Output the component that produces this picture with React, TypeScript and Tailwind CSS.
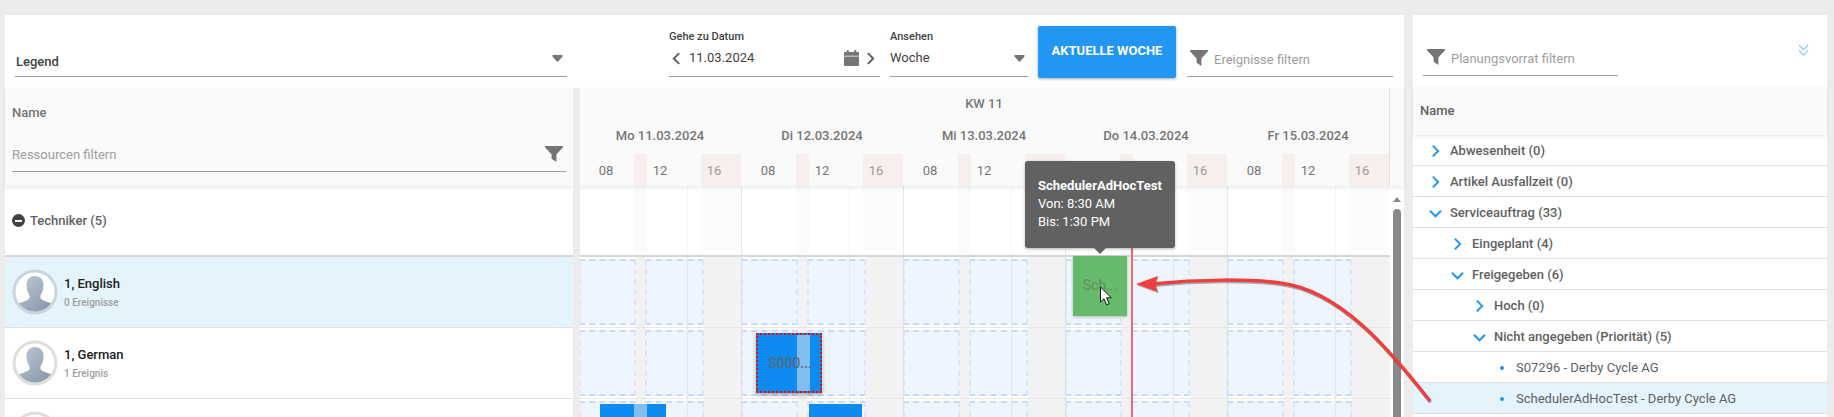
const days = ['Mo 11.03.2024', 'Di 12.03.2024', 'Mi 13.03.2024', 'Do 14.03.2024', 'Fr 15.03.2024']

const tree = [
  { label: 'Abwesenheit (0)', level: 0, kind: 'closed' },
  { label: 'Artikel Ausfallzeit (0)', level: 0, kind: 'closed' },
  { label: 'Serviceauftrag (33)', level: 0, kind: 'open' },
  { label: 'Eingeplant (4)', level: 1, kind: 'closed' },
  { label: 'Freigegeben (6)', level: 1, kind: 'open' },
  { label: 'Hoch (0)', level: 2, kind: 'closed' },
  { label: 'Nicht angegeben (Priorität) (5)', level: 2, kind: 'open' },
  { label: 'S07296 - Derby Cycle AG', level: 3, kind: 'leaf' },
  { label: 'SchedulerAdHocTest - Derby Cycle AG', level: 3, kind: 'leaf', selected: true },
]

function Funnel({ className }: { className?: string }) {
  return (
    <svg viewBox="0 0 18 16" className={className} fill="#757575">
      <path d="M0 0h18v1.2l-6.6 7.3V16l-4.8-3.2V8.500L0 1.200z" />
    </svg>
  )
}

function Caret({ className }: { className?: string }) {
  return (
    <svg viewBox="0 0 12 8" className={className} fill="#757575">
      <path d="M1 0h10c.9 0 1.300 1 .7 1.600L6.700 7.300c-.4.4-1 .4-1.400 0L.3 1.600C-.3 1 .1 0 1 0z" />
    </svg>
  )
}

function Chevron({ dir, color = '#2196f3', className }: { dir: 'left' | 'right' | 'down'; color?: string; className?: string }) {
  const d = dir === 'left' ? 'M8 1 2 7l6 6' : dir === 'right' ? 'M2 1l6 6-6 6' : 'M1 3l6 6 6-6'
  return (
    <svg viewBox={dir === 'down' ? '0 0 14 12' : '0 0 10 14'} className={className} fill="none" stroke={color} strokeWidth="2.200">
      <path d={d} />
    </svg>
  )
}

function Avatar({ ring }: { ring: string }) {
  return (
    <svg viewBox="0 0 46 46" className="w-[46px] h-[46px] shrink-0">
      <defs>
        <linearGradient id="sil" x1="0" y1="0" x2="1" y2="1">
          <stop offset="0" stopColor="#c2ccd6" />
          <stop offset="1" stopColor="#7d8fa3" />
        </linearGradient>
        <clipPath id="inner">
          <circle cx="23" cy="23" r="20.500" />
        </clipPath>
      </defs>
      <circle cx="23" cy="23" r="20.500" fill="#fff" />
      <g clipPath="url(#inner)" fill="url(#sil)">
        <path d="M23 7c5.500 0 8.500 3.800 8.500 9.500 0 3.500-1 6.500-2.500 8.800-.8 1.200-.9 3.400 0 4.500 1.500 1.700 5 2.700 8 3.700 3 1 5 2.500 6 5V46H3v-7.500c1-2.500 3-4 6-5s6.500-2 8-3.700c.9-1.100.8-3.300 0-4.500-1.500-2.300-2.500-5.300-2.500-8.800C14.500 10.800 17.500 7 23 7z" />
      </g>
      <circle cx="23" cy="23" r="21" fill="none" stroke={ring} strokeWidth="3" />
    </svg>
  )
}

function DayGrid({ day }: { day: number }) {
  return (
    <div className="relative w-[162px] h-full flex shrink-0">
      <div className="w-[57px] bg-white pt-[2px]">
        <div className="h-[66px] bg-[#eef5fe] border-y-2 border-x-2 border-dashed border-y-[#c6dbfb] border-x-[#dce6f6]" />
      </div>
      <div className="w-[9px]" />
      <div className="w-[59px] bg-white pt-[2px]">
        <div className="h-[66px] bg-[#eef5fe] border-y-2 border-x-2 border-dashed border-y-[#c6dbfb] border-x-[#dce6f6]" />
      </div>
      <div className="flex-1" />
      <div className="absolute inset-y-0 left-[108px] w-px bg-[#e3e8f1]" />
      {day > 0 && <div className="absolute inset-y-0 left-0 w-px bg-[#d9dee8]" />}
    </div>
  )
}

function TimelineRow({ children }: { children?: React.ReactNode }) {
  return (
    <div className="relative h-[71px] -ml-px flex border-b border-[#e6e6e6] bg-[#f2f2f2]">
      {days.map((d, i) => (
        <DayGrid key={d} day={i} />
      ))}
      {children}
    </div>
  )
}

function Field({ className, children }: { className?: string; children: React.ReactNode }) {
  return <div className={`border-b border-[#9e9e9e] ${className ?? ''}`}>{children}</div>
}

function ResourceRow({ name, count, selected }: { name: string; count: string; selected?: boolean }) {
  return (
    <div className={`h-[71px] flex items-center pl-[7px] gap-[6px] border-b border-[#e0e0e0] ${selected ? 'bg-[#e5f3fd]' : 'bg-white'}`}>
      <Avatar ring={selected ? '#c9d5dd' : '#dedede'} />
      <div>
        <div className="text-[13px] leading-[18px] font-medium text-[#212121]">{name}</div>
        <div className="text-[10px] leading-[14px] mt-[3px] font-medium text-[#9e9e9e]">{count}</div>
      </div>
    </div>
  )
}

export default function App() {
  return (
    <div className="relative w-[1834px] h-[417px] overflow-hidden bg-[#ececec] pt-[15px] flex font-[family-name:Roboto,sans-serif]">

      {/* Scheduler */}
      <div className="ml-[5px] w-[1399px] h-full bg-white flex flex-col shrink-0">

        {/* Toolbar */}
        <div className="h-[73px] relative flex items-end pb-[11px] pl-[10px] shrink-0">
          <Field className="w-[552px] h-[30px] flex items-start justify-between pl-px pr-[4px]">
            <span className="text-[13px] leading-[18px] mt-[6px] font-medium text-[#424242]">Legend</span>
            <Caret className="w-[11px] h-[7px] mt-[8px]" />
          </Field>
          <div className="ml-[102px] w-[211px]">
            <div className="text-[11px] leading-[14px] font-medium text-[#424242] mb-[6px]">Gehe zu Datum</div>
            <Field className="h-[27px] flex items-start">
              <Chevron dir="left" color="#616161" className="w-[9px] h-[13px] mt-[2px] ml-[3px]" />
              <span className="text-[13px] leading-[18px] -mt-px ml-[8px] text-[#424242]">11.03.2024</span>
              <svg viewBox="0 0 16 17" className="w-[15px] h-[16px] ml-[90px] mt-0" fill="#757575">
                <path d="M3 0h2v2h6V0h2v2h2c.6 0 1 .4 1 1v3H0V3c0-.6.4-1 1-1h2zM0 7h16v9c0 .6-.4 1-1 1H1c-.6 0-1-.4-1-1z" />
              </svg>
              <Chevron dir="right" color="#616161" className="w-[9px] h-[13px] mt-[2px] ml-[7px]" />
            </Field>
          </div>
          <div className="ml-[10px] w-[138px]">
            <div className="text-[11px] leading-[14px] font-medium text-[#424242] mb-[6px]">Ansehen</div>
            <Field className="h-[27px] flex items-start justify-between pr-[3px]">
              <span className="text-[13px] leading-[18px] -mt-px text-[#424242]">Woche</span>
              <Caret className="w-[11px] h-[7px] mt-[5px]" />
            </Field>
          </div>
          <button className="ml-[10px] w-[138px] h-[52px] -mb-px pb-[2px] rounded-[2px] bg-[#2196f3] text-white text-[13px] font-bold shadow-[0_1px_3px_rgba(0,0,0,0.35)]">
            AKTUELLE WOCHE
          </button>
          <Field className="ml-[11px] w-[206px] h-[30px] flex items-start pl-[3px]">
            <Funnel className="w-[18px] h-[16px] mt-[3px]" />
            <span className="text-[13px] leading-[18px] mt-[4px] ml-[6px] text-[#9e9e9e]">Ereignisse filtern</span>
          </Field>
        </div>

        {/* Column headers */}
        <div className="relative z-10 h-[98px] flex bg-[#fafafa] shadow-[0_2px_4px_rgba(0,0,0,0.08)] shrink-0">
          <div className="w-[568px] pl-[7px] pr-[7px] shrink-0">
            <div className="mt-[16px] text-[13px] leading-[18px] font-medium text-[#757575]">Name</div>
            <div className="mt-[20px] h-[30px] flex items-start justify-between border-b border-[#9e9e9e]">
              <span className="text-[13px] leading-[18px] text-[#9e9e9e] mt-[4px]">Ressourcen filtern</span>
              <Funnel className="w-[18px] h-[16px] mt-[4px] mr-[3px]" />
            </div>
          </div>
          <div className="relative z-10 w-[7px] bg-[#ececec] shrink-0" />
          <div className="-ml-px w-[811px] border-r border-[#e0e0e0] shrink-0">
            <div className="h-[32px] flex items-center justify-center text-[13px] font-medium text-[#757575]">KW 11</div>
            <div className="h-[34px] flex items-start">
              {days.map((d) => (
                <div key={d} className="w-[162px] text-center text-[13px] leading-[34px] font-medium text-[#757575] -mt-px">{d}</div>
              ))}
            </div>
            <div className="h-[32px] flex">
              {days.map((d) => (
                <div key={d} className="relative w-[162px] grid grid-cols-3 text-[13px] leading-[34px] text-center text-[#757575]">
                  <div className="absolute inset-y-0 left-[55px] w-[13px] bg-[#f7eeee]" />
                  <div className="absolute inset-y-0 left-[122px] w-[40px] bg-[#f7eeee]" />
                  <span className="relative">08</span>
                  <span className="relative">12</span>
                  <span className="relative text-[#a09a9a]">16</span>
                </div>
              ))}
            </div>
          </div>
        </div>

        {/* Rows */}
        <div className="flex flex-1 min-h-0">
          <div className="w-[568px] shrink-0">
            <div className="h-[71px] pl-[7px] flex items-center gap-[5px] border-b-2 border-[#d6d6d6]">
              <span className="w-[13px] h-[13px] rounded-full bg-[#424242] flex items-center justify-center">
                <span className="w-[7px] h-[2px] bg-white" />
              </span>
              <span className="text-[13px] font-medium text-[#616161]">Techniker (5)</span>
            </div>
            <ResourceRow name="1, English" count="0 Ereignisse" selected />
            <ResourceRow name="1, German" count="1 Ereignis" />
            <div className="h-[30px] flex items-start pl-[7px] pt-[12px]">
              <Avatar ring="#dedede" />
            </div>
          </div>
          <div className="relative z-10 w-[7px] bg-[#ececec] shrink-0" />
          <div className="w-[810px] shrink-0">
            <div className="relative h-[71px] -ml-px flex border-b-2 border-[#d6d6d6]">
              {days.map((d, i) => (
                <div key={d} className="relative w-[162px]">
                  <div className="absolute inset-y-0 left-[55px] w-[13px] bg-[#fbfbfb]" />
                  <div className="absolute inset-y-0 left-[122px] w-[40px] bg-[#fcfcfc]" />
                  <div className="absolute inset-y-0 left-[108px] w-px bg-[#f4f4f4]" />
                  {i > 0 && <div className="absolute inset-y-0 left-0 w-px bg-[#e8e8e8]" />}
                </div>
              ))}
            </div>
            <TimelineRow>
              <div className="absolute left-[494px] top-[-1px] w-[54px] h-[60px] bg-[#66bb6a] shadow-[0_1px_3px_rgba(0,0,0,0.25)] flex items-center justify-center text-[14px] text-[#5f8f64] pb-[2px]">
                Sch...
              </div>
            </TimelineRow>
            <TimelineRow>
              <div className="absolute left-[177px] top-[5px] w-[66px] h-[60px] bg-[#0d8bf0] border-2 border-dotted border-[#ff0000] shadow-[0_2px_4px_rgba(0,0,0,0.3)] flex items-center justify-end pr-[8px] text-[14px] font-medium text-[#566a7c]">
                <div className="absolute top-0 bottom-0 left-[39px] w-[13px] bg-[#82bdf1]" />
                <span className="relative">S000...</span>
              </div>
            </TimelineRow>
            <TimelineRow>
              <div className="absolute left-[21px] top-[5px] w-[66px] h-[60px] bg-[#0d8bf0]">
                <div className="absolute inset-y-0 left-[34px] w-[13px] bg-[#82bdf1]" />
              </div>
              <div className="absolute left-[230px] top-[5px] w-[53px] h-[60px] bg-[#0d8bf0]" />
            </TimelineRow>
          </div>
          <div className="relative w-[15px] shrink-0">
            <svg viewBox="0 0 8 5" className="absolute left-[3px] top-[11px] w-[8px] h-[5px]" fill="#8a8a8a">
              <path d="M4 0l4 5H0z" />
            </svg>
            <div className="absolute left-[3px] top-[23px] w-[8px] h-[300px] rounded-full bg-[#8a8a8a]" />
          </div>
        </div>
      </div>

      {/* Planning backlog */}
      <div className="ml-[9px] w-[414px] h-full bg-white flex flex-col shrink-0">
        <div className="relative h-[72px] flex items-end pb-[11px] pl-[10px] shrink-0">
          <Field className="w-[195px] h-[30px] flex items-start pl-[4px]">
            <Funnel className="w-[18px] h-[16px] mt-[3px]" />
            <span className="text-[13px] leading-[18px] mt-[4px] ml-[6px] text-[#9e9e9e]">Planungsvorrat filtern</span>
          </Field>
          <svg viewBox="0 0 12 14" className="absolute right-[18px] top-[29px] w-[11px] h-[13px]" fill="none" stroke="#90caf9" strokeWidth="1.400">
            <path d="M1 1l5 5 5-5M1 7l5 5 5-5" />
          </svg>
        </div>
        <div className="relative z-10 h-[48px] pl-[7px] flex items-center bg-[#fafafa] shadow-[0_2px_4px_rgba(0,0,0,0.08)] text-[13px] font-medium text-[#616161] shrink-0">
          Name
        </div>
        {tree.map((t) => (
          <div
            key={t.label}
            className={`h-[31px] shrink-0 pt-[2px] flex items-center border-b border-[#e0e0e0] ${t.selected ? 'bg-[#e5f3fd]' : ''}`}
          >
            <div
              className={
                t.level === 0 ? 'w-[37px] flex justify-end pr-[10px]'
                : t.level === 1 ? 'w-[59px] flex justify-end pr-[10px]'
                : t.level === 2 ? 'w-[81px] flex justify-end pr-[10px]'
                : 'w-[103px] flex justify-end pr-[12px]'
              }
            >
              {t.kind === 'closed' && <Chevron dir="right" className="w-[9px] h-[14px]" />}
              {t.kind === 'open' && <Chevron dir="down" className="w-[13px] h-[11px] -mr-[2px]" />}
              {t.kind === 'leaf' && <span className="w-[4px] h-[4px] rounded-full bg-[#2196f3]" />}
            </div>
            <span className={`text-[13px] text-[#616161] ${t.kind === 'leaf' ? '' : 'font-medium'}`}>{t.label}</span>
          </div>
        ))}
      </div>

      {/* Now marker */}
      <div className="absolute z-20 left-[1131px] top-[186px] bottom-0 w-[2px] bg-[#f26b6b]" />

      {/* Event tooltip */}
      <div className="absolute z-20 left-[1025px] top-[161px] w-[150px] h-[87px] rounded-[3px] bg-[#616161] shadow-[0_1px_3px_rgba(0,0,0,0.3)] pl-[13px] pt-[16px] text-[13px] leading-[18px] text-white">
        <div className="font-bold">SchedulerAdHocTest</div>
        <div>Von: 8:30 AM</div>
        <div>Bis: 1:30 PM</div>
        <div className="absolute left-[69px] top-[87px] w-0 h-0 border-x-[6px] border-x-transparent border-t-[6px] border-t-[#616161]" />
      </div>

      {/* Screenshot annotation and mouse cursor */}
      <svg viewBox="0 0 1834 417" className="absolute z-30 inset-0 w-[1834px] h-[417px] pointer-events-none">
        <path d="M1430 401C1390 350 1340 290 1280 283C1250 279 1200 279 1152 284" transform="translate(0.6 1.5)" fill="none" stroke="#000" strokeOpacity="0.3" strokeWidth="3.500" />
        <path d="M1136 284 1158 276 1155 284 1158 292z" transform="translate(0.6 1.2)" fill="#000" fillOpacity="0.3" />
        <path d="M1430 401C1390 350 1340 290 1280 283C1250 279 1200 279 1152 284" fill="none" stroke="#ee3e3e" strokeWidth="3.500" />
        <path d="M1136 284 1158 276 1155 284 1158 292z" fill="#ee3e3e" />
        <path d="M1100.500 287v15l3.500-3.200 2.600 6 2.600-1.100-2.600-5.900h4.700z" fill="#fff" stroke="#111" strokeWidth="1" />
      </svg>
    </div>
  )
}
